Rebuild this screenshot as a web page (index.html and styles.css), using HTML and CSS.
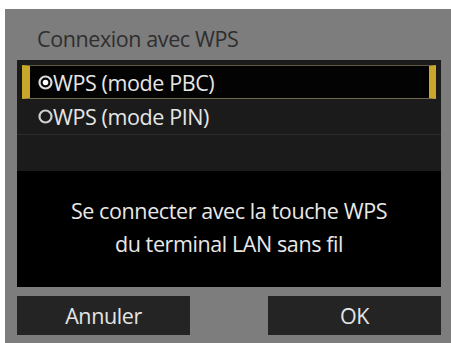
FILE: index.html
```html
<!DOCTYPE html>
<html lang="fr">
<head>
<meta charset="utf-8">
<link rel="stylesheet" href="styles.css">
</head>
<body>
<div class="screen">
  <div class="title">Connexion avec WPS</div>
  <div class="panel">
    <div class="list">
      <div class="row selected">
        <svg class="radio" viewBox="0 0 15 15" width="15" height="15"><circle cx="7.5" cy="7.5" r="6" fill="none" stroke="#dcdcdc" stroke-width="2.2"/><circle cx="7.5" cy="7.5" r="2.8" fill="#ffffff"/></svg>
        <span>WPS (mode PBC)</span>
      </div>
      <div class="row">
        <svg class="radio" viewBox="0 0 15 15" width="15" height="15"><circle cx="7.5" cy="7.5" r="6" fill="none" stroke="#d0d0d0" stroke-width="2.2"/></svg>
        <span>WPS (mode PIN)</span>
      </div>
      <div class="row empty"></div>
    </div>
    <div class="message">
      <p>Se connecter avec la touche WPS</p>
      <p>du terminal LAN sans fil</p>
    </div>
  </div>
  <div class="buttons">
    <div class="btn">Annuler</div>
    <div class="btn">OK</div>
  </div>
</div>
</body>
</html>
```
FILE: styles.css
```css
html, body {
  margin: 0;
  padding: 0;
  background: #ffffff;
}
body {
  padding: 9px 0 0 5px;
  font-family: "Open Sans", "Noto Sans", sans-serif;
}
.screen {
  width: 446px;
  height: 334px;
  background: #7d7d7d;
  display: flex;
  flex-direction: column;
}
.title {
  height: 51px;
  box-sizing: border-box;
  padding: 16px 0 0 32px;
  font-size: 21.5px;
  line-height: 28px;
  color: #2e2e2e;
  letter-spacing: -0.4px;
}
.panel {
  margin-left: 12px;
  width: 424px;
  background: #000;
  display: flex;
  flex-direction: column;
}
.list {
  background: #1b1b1b;
  padding-top: 5px;
  display: flex;
  flex-direction: column;
}
.row {
  height: 36px;
  box-sizing: border-box;
  display: flex;
  align-items: center;
  gap: 0;
  padding-left: 21px;
  color: #e6e6e6;
  font-size: 21.5px;
  font-weight: 500;
  letter-spacing: -0.4px;
  border-bottom: 1px solid #2c2c2c;
}
.row.selected {
  height: 34px;
  background: #030303;
  border-top: 1px solid #5d5a3e;
  border-bottom: 1px solid #6f6a4c;
  border-left: 8px solid #c9a72a;
  border-right: 7px solid #c9a72a;
  margin: 0 5px;
  padding-left: 8px;
}
.row.empty {
  height: 36px;
  border-bottom: none;
}
.radio {
  flex: none;
}
.message {
  height: 116px;
  display: flex;
  flex-direction: column;
  align-items: center;
  justify-content: center;
  padding-bottom: 4px;
  box-sizing: border-box;
  color: #e8e8e8;
  font-size: 21.5px;
  font-weight: 500;
  letter-spacing: -0.4px;
}
.message p {
  margin: 0;
  line-height: 33px;
}
.buttons {
  margin: 9px 0 0 12px;
  width: 424px;
  display: flex;
  justify-content: space-between;
}
.btn {
  width: 173px;
  height: 39px;
  background: #242424;
  color: #e4e4e4;
  font-size: 21.5px;
  font-weight: 500;
  display: flex;
  align-items: center;
  justify-content: center;
  letter-spacing: -0.4px;
}
```
